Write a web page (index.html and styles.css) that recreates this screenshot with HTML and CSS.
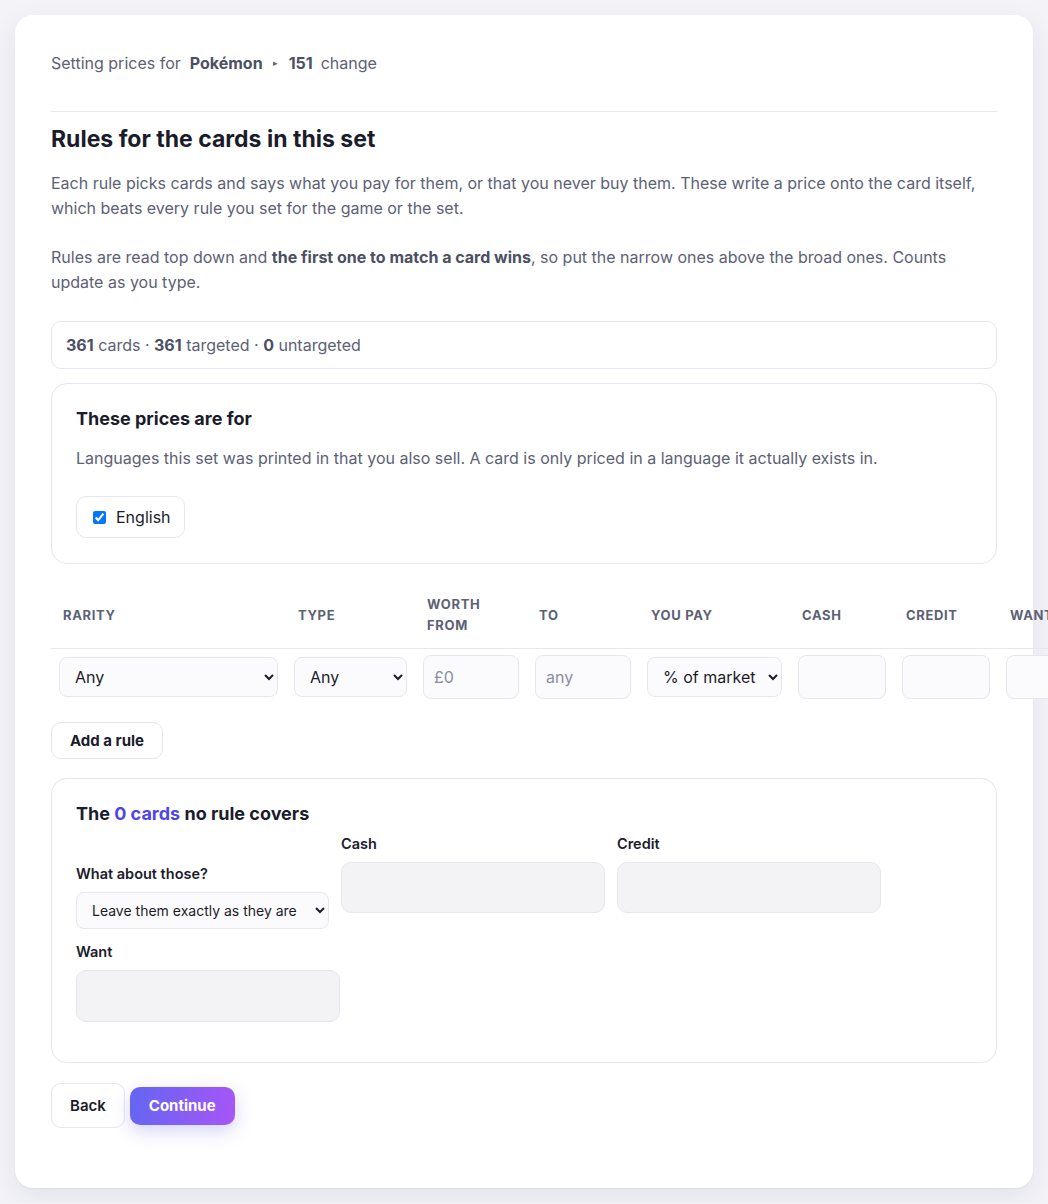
FILE: index.html
```html
<!DOCTYPE html>
<html lang="en">
<head>
<meta charset="utf-8">
<title>Rules for the cards in this set</title>
<link rel="stylesheet" href="styles.css">
</head>
<body>
<main class="card">
  <div class="crumbs">
    <span class="crumb-lead">Setting prices for</span>
    <strong class="crumb-item">Pokémon</strong>
    <span class="crumb-sep">&#9656;</span>
    <strong class="crumb-item">151</strong>
    <span class="crumb-change">change</span>
  </div>
  <hr class="rule-line">
  <h2 class="title">Rules for the cards in this set</h2>
  <p class="lead">Each rule picks cards and says what you pay for them, or that you never buy them. These write a price onto the card itself, which beats every rule you set for the game or the set.</p>
  <p class="lead">Rules are read top down and <strong>the first one to match a card wins</strong>, so put the narrow ones above the broad ones. Counts update as you type.</p>

  <div class="stats"><strong>361</strong> cards · <strong>361</strong> targeted · <strong>0</strong> untargeted</div>

  <section class="panel langs">
    <h3 class="panel-title">These prices are for</h3>
    <p class="panel-desc">Languages this set was printed in that you also sell. A card is only priced in a language it actually exists in.</p>
    <label class="chip"><input type="checkbox" checked> <span>English</span></label>
  </section>

  <table class="rules">
    <thead>
      <tr>
        <th>Rarity</th>
        <th>Type</th>
        <th>Worth from</th>
        <th>To</th>
        <th>You pay</th>
        <th>Cash</th>
        <th>Credit</th>
        <th>Want</th>
      </tr>
    </thead>
    <tbody>
      <tr>
        <td><select class="ctl sel w-rarity"><option>Any</option></select></td>
        <td><select class="ctl sel w-type"><option>Any</option></select></td>
        <td><input class="ctl inp w-range" placeholder="£0"></td>
        <td><input class="ctl inp w-range" placeholder="any"></td>
        <td><select class="ctl sel w-pay"><option>% of market</option></select></td>
        <td><input class="ctl inp w-num"></td>
        <td><input class="ctl inp w-num"></td>
        <td><input class="ctl inp w-num"></td>
      </tr>
    </tbody>
  </table>

  <button class="btn-outline add-rule" type="button">Add a rule</button>

  <section class="panel uncovered">
    <h3 class="panel-title heading-tight">The <span class="accent">0 cards</span> no rule covers</h3>
    <div class="fields">
      <div class="field">
        <label class="field-label">What about those?</label>
        <select class="ctl sel small"><option>Leave them exactly as they are</option></select>
      </div>
      <div class="field">
        <label class="field-label">Cash</label>
        <input class="ctl big" disabled>
      </div>
      <div class="field">
        <label class="field-label">Credit</label>
        <input class="ctl big" disabled>
      </div>
      <div class="field">
        <label class="field-label">Want</label>
        <input class="ctl big tall" disabled>
      </div>
    </div>
  </section>

  <div class="actions">
    <button class="btn-outline back" type="button">Back</button>
    <button class="btn-primary" type="button">Continue</button>
  </div>
</main>
</body>
</html>
```
FILE: styles.css
```css
html, body {
  margin: 0;
  padding: 0;
}
body {
  background: #f3f3f8;
  font-family: Inter, "Noto Sans", "Liberation Sans", sans-serif;
  color: #1b1c2b;
  overflow-x: hidden;
  padding: 15px;
}
.card {
  background: #ffffff;
  border-radius: 18px;
  box-shadow: 0 10px 30px rgba(40, 40, 90, 0.08), 0 1px 2px rgba(40, 40, 90, 0.05);
  padding: 36px 36px 60px;
  box-sizing: border-box;
}
.crumbs {
  display: flex;
  align-items: center;
  font-size: 16px;
  line-height: 24px;
  color: #5c6175;
}
.crumb-item {
  font-weight: 700;
  color: #4b5063;
}
.crumb-lead { margin-right: 9px; }
.crumb-sep {
  font-size: 9px;
  margin: 0 11px 0 10px;
  color: #5c6175;
}
.crumb-change { margin-left: 8px; }

.rule-line {
  border: 0;
  border-top: 1px solid #e6e7ee;
  margin: 36px 0 0;
}
.title {
  font-size: 23px;
  line-height: 30px;
  font-weight: 700;
  margin: 12px 0 17px;
  color: #1b1c2b;
}
.lead {
  font-size: 16px;
  line-height: 25px;
  color: #5c6175;
  margin: 0 0 24px;
}
.lead strong {
  color: #4b5063;
  font-weight: 700;
}
.stats {
  border: 1px solid #e6e7ee;
  border-radius: 10px;
  padding: 11px 14px;
  font-size: 16px;
  line-height: 24px;
  color: #5c6175;
  margin-top: 26px;
}
.stats strong { color: #4b5063; }

.panel {
  border: 1px solid #e6e7ee;
  border-radius: 16px;
  padding: 23px 24px 24px;
}
.langs { margin-top: 14px; padding-bottom: 25px; }
.panel-title {
  font-size: 18px;
  line-height: 24px;
  font-weight: 700;
  margin: 0 0 15px;
  color: #1b1c2b;
}
.panel-desc {
  font-size: 16px;
  line-height: 25px;
  color: #5c6175;
  margin: 0 0 25px;
}
.chip {
  display: inline-flex;
  align-items: center;
  gap: 10px;
  height: 42px;
  box-sizing: border-box;
  border: 1px solid #e6e7ee;
  border-radius: 10px;
  padding: 0 13px 0 16px;
  font-size: 16px;
  color: #1b1c2b;
  vertical-align: top;
}
.chip input {
  margin: 0;
  width: 13px;
  height: 13px;
}

.rules {
  border-collapse: collapse;
  margin-top: 18px;
}
.rules th {
  text-align: left;
  font-size: 13px;
  line-height: 21px;
  font-weight: 700;
  letter-spacing: 0.05em;
  text-transform: uppercase;
  color: #5c6175;
  padding: 12px 12px;
  border-bottom: 1px solid #e6e7ee;
}
.rules td {
  padding: 6px 8px;
  vertical-align: middle;
}
.ctl {
  font-family: Inter, "Noto Sans", "Liberation Sans", sans-serif;
  font-size: 16px;
  color: #1b1c2b;
  border: 1px solid #e6e7ee;
  background: #fbfbfd;
  border-radius: 8px;
  box-sizing: border-box;
  display: block;
  margin: 0;
}
.sel {
  height: 40px;
  padding: 0 8px 0 11px;
}
.inp {
  height: 44px;
  padding: 0 10px;
}
.inp::placeholder { color: #8a8e9c; }
.w-rarity { width: 219px; }
.w-type { width: 113px; }
.w-range { width: 96px; }
.w-pay { width: 135px; }
.w-num { width: 88px; }

.btn-outline {
  font-family: Inter, "Noto Sans", "Liberation Sans", sans-serif;
  background: #ffffff;
  border: 1px solid #e6e7ee;
  border-radius: 10px;
  color: #1b1c2b;
  cursor: pointer;
}
.add-rule {
  display: block;
  margin-top: 17px;
  height: 37px;
  padding: 0 18px;
  font-size: 15px;
  font-weight: 700;
}
.uncovered { margin-top: 19px; padding-bottom: 24px; }
.heading-tight { margin-bottom: 8px; }
.accent { color: #4f46e5; }
.fields {
  display: flex;
  flex-wrap: wrap;
  align-items: flex-end;
  column-gap: 12px;
  row-gap: 13px;
  max-width: 896px;
}
.field-label {
  display: block;
  font-size: 14.5px;
  line-height: 20px;
  font-weight: 600;
  color: #1b1c2b;
  margin-bottom: 8px;
}
.small {
  height: 37px;
  font-size: 14px;
  padding: 0 6px 0 11px;
  width: 253px;
}
.big {
  width: 264px;
  height: 51px;
  background: #f3f3f6;
  border-radius: 10px;
  margin-bottom: 16px;
}
.tall { height: 52px; }

.actions {
  display: flex;
  align-items: center;
  gap: 5px;
  margin-top: 20px;
}
.back {
  height: 45px;
  padding: 0 18px;
  font-size: 15px;
  font-weight: 600;
}
.btn-primary {
  font-family: Inter, "Noto Sans", "Liberation Sans", sans-serif;
  height: 38px;
  padding: 0 19px;
  border: 0;
  border-radius: 10px;
  background: linear-gradient(100deg, #6366f1 0%, #a855f7 100%);
  color: #ffffff;
  font-size: 15px;
  font-weight: 700;
  box-shadow: 0 6px 18px rgba(99, 102, 241, 0.28);
  cursor: pointer;
}
```
